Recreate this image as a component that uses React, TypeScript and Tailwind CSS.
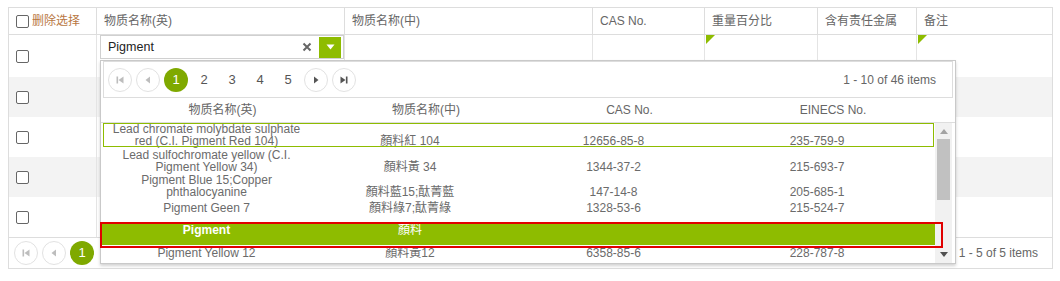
import React from 'react';

const GREEN = 'bg-[#8ebc00]';

const Check: React.FC = () => (
  <span className="inline-block w-[13px] h-[13px] border border-[#666] rounded-[2px] bg-white" />
);

const PagerIcon: React.FC<{ kind: 'first' | 'prev' | 'next' | 'last'; dark?: boolean }> = ({ kind, dark }) => {
  const c = dark ? '#555' : '#bdbdbd';
  return (
    <svg width="10" height="10" viewBox="0 0 10 10">
      {kind === 'first' && (
        <>
          <rect x="1.5" y="1.5" width="1.6" height="7" fill={c} />
          <path d="M8.5 1.5 L3.5 5 L8.5 8.5 Z" fill={c} />
        </>
      )}
      {kind === 'prev' && <path d="M7 1.5 L2.5 5 L7 8.5 Z" fill={c} />}
      {kind === 'next' && <path d="M3 1.5 L7.5 5 L3 8.5 Z" fill={c} />}
      {kind === 'last' && (
        <>
          <path d="M1.5 1.5 L6.5 5 L1.5 8.5 Z" fill={c} />
          <rect x="6.9" y="1.5" width="1.6" height="7" fill={c} />
        </>
      )}
    </svg>
  );
};

const Circle: React.FC<{ children: React.ReactNode; active?: boolean; plain?: boolean }> = ({ children, active, plain }) => (
  <div className="w-[28px] flex justify-center">
    <span
      className={
        'w-[24px] h-[24px] rounded-full flex items-center justify-center text-[13px] ' +
        (active
          ? 'bg-[#7fa900] text-white'
          : plain
          ? 'text-[#555]'
          : 'border border-[#e2e2e2] bg-white')
      }
    >
      {children}
    </span>
  </div>
);

const Corner: React.FC = () => (
  <span className="absolute left-[1px] top-0 w-0 h-0 border-t-[9px] border-r-[9px] border-t-[#8ebc00] border-r-transparent" />
);

const cols = 'grid grid-cols-[87px_248px_248px_112px_113px_99px_136px]';
const listCols = 'grid grid-cols-[203px_204px_203px_204px] items-end text-center';

const items = [
  { en: ['Lead chromate molybdate sulphate', 'red (C.I. Pigment Red 104)'], zh: '顏料紅 104', cas: '12656-85-8', ein: '235-759-9', cls: 'h-[24px] outline outline-1 -outline-offset-1 outline-[#8ebc00]' },
  { en: ['Lead sulfochromate yellow (C.I.', 'Pigment Yellow 34)'], zh: '顏料黃 34', cas: '1344-37-2', ein: '215-693-7', cls: 'h-[26px] pt-[2px]' },
  { en: ['Pigment Blue 15;Copper', 'phthalocyanine'], zh: '顏料藍15;酞菁藍', cas: '147-14-8', ein: '205-685-1', cls: 'h-[25px] pt-[1px]' },
  { en: ['Pigment Geen 7'], zh: '顏料綠7;酞菁綠', cas: '1328-53-6', ein: '215-524-7', cls: 'h-[14px] mt-[2px] mb-[10px]' },
];

export default function App() {
  return (
    <div className="relative w-[1060px] h-[281px] bg-white text-[12px] text-[#666] font-['Liberation_Sans','Noto_Sans_CJK_SC',sans-serif] overflow-hidden">
      <div className="pt-[7px] pl-2">
        <div className="w-[1045px] border border-[#ddd]">
          {/* header */}
          <div className={cols + ' h-[27px] border-b border-[#ddd]'}>
            <div className="flex items-center gap-[3px] pl-[7px]">
              <Check />
              <span className="text-[#b9773f]">删除选择</span>
            </div>
            {['物质名称(英)', '物质名称(中)', 'CAS No.', '重量百分比', '含有责任金属', '备注'].map((h) => (
              <div key={h} className="flex items-center pl-[7px] border-l border-[#ddd]">
                {h}
              </div>
            ))}
          </div>
          {/* rows */}
          {[0, 1, 2, 3, 4].map((i) => (
            <div
              key={i}
              className={cols + (i === 0 ? ' h-[42px]' : ' h-[40px]') + (i % 2 === 1 ? ' bg-[#f3f3f3]' : ' bg-white')}
            >
              <div className="flex items-center pl-[7px]">
                <Check />
              </div>
              {i === 0 ? (
                <>
                  <div className="border-l border-[#e4e4e4] pl-[3px] pt-0">
                    <div className="h-[24px] w-[244px] border border-[#d0d0d0] bg-white flex items-center pl-[7px] pr-[2px]">
                      <span className="flex-1 text-[12.5px] text-[#222]">Pigment</span>
                      <svg width="10" height="10" viewBox="0 0 10 10" className="mr-[7px]">
                        <path d="M1.5 1.5 L8.5 8.5 M8.5 1.5 L1.5 8.5" stroke="#666" strokeWidth="2" />
                      </svg>
                      <span className={GREEN + ' w-[22px] h-[21px] flex items-center justify-center'}>
                        <svg width="9" height="6" viewBox="0 0 9 6">
                          <path d="M0.5 0.5 L8.5 0.5 L4.5 5.5 Z" fill="#fff" />
                        </svg>
                      </span>
                    </div>
                  </div>
                  <div className="border-l border-[#e4e4e4]" />
                  <div className="border-l border-[#e4e4e4]" />
                  <div className="relative border-l border-[#e4e4e4]">
                    <Corner />
                  </div>
                  <div className="border-l border-[#e4e4e4]" />
                  <div className="relative border-l border-[#e4e4e4]">
                    <Corner />
                  </div>
                </>
              ) : (
                [0, 1, 2, 3, 4, 5].map((c) => <div key={c} className="border-l border-[#e4e4e4]" />)
              )}
            </div>
          ))}
          {/* pager */}
          <div className="h-[31px] border-t border-[#ddd] flex items-center pl-[3px] pr-[14px]">
            <Circle><PagerIcon kind="first" /></Circle>
            <Circle><PagerIcon kind="prev" /></Circle>
            <Circle active>1</Circle>
            <span className="ml-auto">1 - 5 of 5 items</span>
          </div>
        </div>
      </div>

      {/* combobox dropdown */}
      <div className="absolute left-[100px] top-[60px] w-[856px] h-[204px] bg-white border border-[#c9c9c9] shadow-[0_2px_3px_rgba(0,0,0,0.18)]">
        <div className="mx-[2px] h-[37px] border border-[#ddd] flex items-center pl-[2px] pr-[16px]">
          <Circle><PagerIcon kind="first" /></Circle>
          <Circle><PagerIcon kind="prev" /></Circle>
          <Circle active>1</Circle>
          <Circle plain>2</Circle>
          <Circle plain>3</Circle>
          <Circle plain>4</Circle>
          <Circle plain>5</Circle>
          <Circle><PagerIcon kind="next" dark /></Circle>
          <Circle><PagerIcon kind="last" dark /></Circle>
          <span className="ml-auto">1 - 10 of 46 items</span>
        </div>
        <div className="h-[25px] border-b border-[#ddd] pl-[20px] grid grid-cols-[203px_204px_203px_204px] items-center text-center">
          <span>物质名称(英)</span>
          <span>物质名称(中)</span>
          <span>CAS No.</span>
          <span>EINECS No.</span>
        </div>
        <div className="flex h-[140px]">
          <div className="pl-[2px] w-[834px] overflow-hidden leading-[12px] text-[#6b6b6b]">
            {items.map((it) => (
              <div key={it.cas} className={'w-[831px] pl-[2px] ' + listCols + ' ' + it.cls}>
                <div>
                  {it.en.map((l) => (
                    <div key={l}>{l}</div>
                  ))}
                </div>
                <div>{it.zh}</div>
                <div>{it.cas}</div>
                <div>{it.ein}</div>
              </div>
            ))}
            <div className={'w-[833px] -ml-px my-[2px] h-[21px] pl-[3px] ' + GREEN + ' grid grid-cols-[203px_204px_203px_204px] items-start text-center text-white'}>
              <div className="font-bold">Pigment</div>
              <div>顏料</div>
              <div />
              <div />
            </div>
            <div className={'w-[831px] pl-[2px] ' + listCols}>
              <div>Pigment Yellow 12</div>
              <div>顏料黃12</div>
              <div>6358-85-6</div>
              <div>228-787-8</div>
            </div>
          </div>
          <div className="w-[17px] h-[140px] bg-[#f1f1f1] flex flex-col items-center">
            <div className="h-[16px] flex items-center justify-center">
              <svg width="8" height="5" viewBox="0 0 8 5">
                <path d="M0 5 L8 5 L4 0 Z" fill="#a3a3a3" />
              </svg>
            </div>
            <div className="w-[13px] h-[61px] bg-[#c1c1c1]" />
            <div className="mt-auto h-[17px] flex items-center justify-center">
              <svg width="8" height="5" viewBox="0 0 8 5">
                <path d="M0 0 L8 0 L4 5 Z" fill="#505050" />
              </svg>
            </div>
          </div>
        </div>
        {/* red annotation box */}
        <div className="absolute left-[-1px] top-[161px] w-[843px] h-[26px] border-2 border-[#e00000]" />
      </div>
    </div>
  );
}
